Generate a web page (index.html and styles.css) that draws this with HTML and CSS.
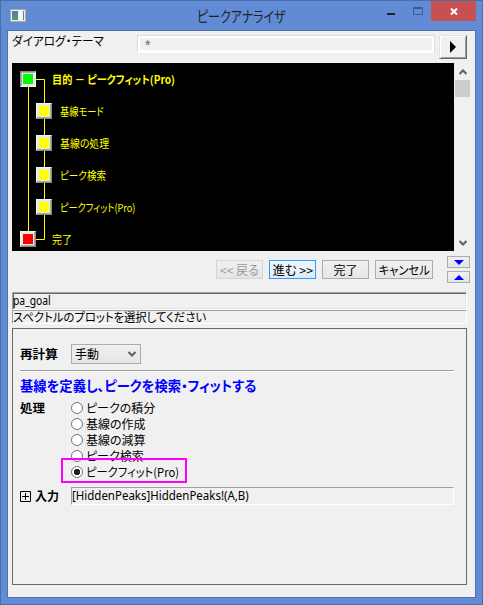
FILE: index.html
```html
<!DOCTYPE html>
<html lang="ja">
<head>
<meta charset="utf-8">
<title>ピークアナライザ</title>
<link rel="stylesheet" href="styles.css">
</head>
<body>
<div class="window">
  <header class="titlebar">
    <svg class="appicon" width="16" height="13" viewBox="0 0 16 13"><defs><linearGradient id="g" x2="0" y2="1"><stop stop-color="#5680a8"/><stop offset="1" stop-color="#46a078"/></linearGradient></defs><rect x=".5" y=".5" width="15" height="12" fill="#eee" stroke="#b5aaa0"/><rect x="2" y="2" width="6" height="9" fill="url(#g)"/><rect x="9" y="2" width="3" height="9" fill="#fff"/><rect x="13" y="2" width="1" height="9" fill="url(#g)"/></svg>
    <h1><span class="t title-text">ピークアナライザ</span></h1>
    <div class="controls">
      <span class="min"></span><span class="max"></span>
      <span class="close"><svg width="8" height="7" viewBox="0 0 8 7"><path d="M1 .5 7 6.5M7 .5 1 6.5" stroke="#fff" stroke-width="2"/></svg></span>
    </div>
  </header>
  <main class="client">
    <div class="theme-row">
      <label><span class="t theme-text">ダイアログ・テーマ</span></label>
      <div class="theme-field">*</div>
      <button class="theme-button"><svg width="6" height="12" viewBox="0 0 6 12"><path d="M0 0 6 6 0 12Z"/></svg></button>
    </div>
    <div class="wizard">
      <div class="tree">
        <svg class="wires" width="60" height="188" viewBox="0 0 60 188"><path d="M16.500 16V176M24 16.500H32.500V176.500H24" fill="none" stroke="#ff0"/></svg>
        <div class="node root"><i class="green"></i><b class="t goal-text">目的 － ピークフィット(Pro)</b></div>
        <div class="node"><i></i><span class="t mode-text">基線モード</span></div>
        <div class="node"><i></i><span class="t treat-text">基線の処理</span></div>
        <div class="node"><i></i><span class="t find-text">ピーク検索</span></div>
        <div class="node"><i></i><span class="t fit-text">ピークフィット(Pro)</span></div>
        <div class="node root"><i class="red"></i><span class="t done-text">完了</span></div>
      </div>
      <div class="scroll">
        <svg width="8" height="6" viewBox="0 0 8 6"><path d="M.5 5 4 1.500 7.500 5" fill="none" stroke="#606060" stroke-width="2"/></svg>
        <div class="thumb"></div>
        <svg class="down" width="8" height="6" viewBox="0 0 8 6"><path d="M.5 1 4 4.500 7.500 1" fill="none" stroke="#606060" stroke-width="2"/></svg>
      </div>
    </div>
    <div class="actions">
      <button class="disabled"><span class="t back-text">&lt;&lt; 戻る</span></button>
      <button class="primary"><span class="t next-text">進む &gt;&gt;</span></button>
      <button><span class="t finish-text">完了</span></button>
      <button class="cancel"><span class="t cancel-text">キャンセル</span></button>
      <div class="spin">
        <button><svg width="10" height="5" viewBox="0 0 10 5"><path d="M0 0H10L5 5Z" fill="#00f"/></svg></button>
        <button><svg width="10" height="5" viewBox="0 0 10 5"><path d="M0 5H10L5 0Z" fill="#00f"/></svg></button>
      </div>
    </div>
    <div class="status name"><span class="t name-text">pa_goal</span></div>
    <div class="status hint"><span class="t hint-text">スペクトルのプロットを選択してください</span></div>
    <section class="panel">
      <div class="recalc">
        <b class="t recalc-text">再計算</b>
        <div class="select"><span class="t manual-text">手動</span><svg width="8" height="6" viewBox="0 0 8 6"><path d="M.5 1 4 4.500 7.500 1" fill="none" stroke="#606060" stroke-width="2"/></svg></div>
      </div>
      <h2><span class="t heading-text">基線を定義し、ピークを検索・フィットする</span></h2>
      <div class="process">
        <b class="t process-text">処理</b>
        <div class="options">
          <label><i></i><span class="t o1-text">ピークの積分</span></label>
          <label><i></i><span class="t o2-text">基線の作成</span></label>
          <label><i></i><span class="t o3-text">基線の減算</span></label>
          <label><i></i><span class="t o4-text">ピーク検索</span></label>
          <label><i class="on"></i><span class="t o5-text">ピークフィット(Pro)</span></label>
          <div class="highlight"></div>
        </div>
      </div>
      <div class="input-row">
        <svg width="11" height="11" viewBox="0 0 11 11"><path d="M.5 .5H10.500V10.500H.5ZM2 5.500H9M5.500 2V9" fill="none" stroke="#000"/></svg>
        <b class="t input-text">入力</b>
        <div class="input-field"><span class="t range-text">[HiddenPeaks]HiddenPeaks!(A,B)</span></div>
      </div>
    </section>
  </main>
</div>
</body>
</html>
```

FILE: styles.css
```css
* { box-sizing: border-box; }
body { margin: 0; font: 12px/16px "Noto Sans CJK JP", sans-serif; color: #000; }
button { padding: 0; border: 1px solid #acacac; background: linear-gradient(#f0f0f0, #e5e5e5); font: inherit; color: inherit; display: flex; align-items: center; justify-content: center; }
svg { display: block; flex: none; }
.t { display: inline-block; flex: none; white-space: pre; transform-origin: 0 50%; font-feature-settings: "palt"; }
button .t { transform-origin: 50% 50%; }

.window { width: 483px; height: 605px; background: #628bd5; border: 1px solid #4a6da7; padding: 0 6px 6px; }
.titlebar { height: 29px; display: flex; align-items: flex-start; margin-right: -1px; }
.appicon { margin: 8px 0 0 3px; }
h1 { margin: 5px 0 0 171px; width: 190px; font: 15px/20px "Noto Sans CJK JP", sans-serif; color: #222; }
.controls { display: flex; flex: none; }
.min { width: 8px; height: 2px; background: #222; margin: 12px 0 0; }
.max { width: 10px; height: 8px; border: 1px solid #415c8d; border-top-width: 2px; margin: 6px 0 0 18px; }
.close { width: 45px; height: 20px; background: #c75050; margin-left: 8px; display: flex; align-items: center; justify-content: center; }

.client { height: 568px; background: #f0f0f0; border: 1px solid #5073b3; padding: 4px 4px 0; }
.theme-row { display: flex; height: 28px; }
.theme-row label { width: 125px; margin-top: -2px; }
.theme-field { width: 298px; height: 18px; border: 1px solid #dcdcdc; border-bottom-color: #fff; box-shadow: inset 0 0 0 2px #fff; padding: 1px 7px; color: #666; font: 14px/16px "Liberation Sans", sans-serif; }
.theme-button { width: 28px; height: 24px; margin-left: 4px; background: #f0f0f0; border: 1px solid #e3e3e3; border-right: 1px solid #696969; border-bottom: 1px solid #696969; box-shadow: inset 1px 1px #fff, inset -1px -1px #a0a0a0; }

.wizard { display: flex; height: 188px; }
.tree { width: 442px; background: #000; padding-top: 8px; position: relative; color: #ff0; font-size: 11px; }
.wires { position: absolute; left: 0; top: 0; }
.node { position: relative; display: flex; height: 32px; padding-left: 24px; }
.node.root { padding-left: 8px; }
.node i { width: 16px; height: 16px; background: #ff0; border: 1px solid; border-color: #f4f4f4 #888 #888 #f4f4f4; box-shadow: inset -1px -1px #aaa, inset 0 0 0 2px #e8e8e8; margin-right: 8px; }
.node.root i { margin-right: 16px; }
.node .green { background: #0f0; border-color: #888 #f4f4f4 #f4f4f4 #888; box-shadow: inset 1px 1px #aaa, inset 0 0 0 2px #e8e8e8; }
.node .red { background: #f00; }
.scroll { width: 17px; display: flex; flex-direction: column; align-items: center; padding-top: 6px; }
.thumb { width: 15px; height: 17px; background: #cdcdcd; margin-top: 5px; }
.down { margin: auto 0 5px; }

.actions { display: flex; gap: 6px; height: 41px; padding: 9px 0 0 204px; }
.actions > button { width: 47px; height: 19px; flex: none; }
.actions > .cancel { width: 58px; }
.actions > .disabled { color: #999; border-color: #d5d5d5; }
.actions > .primary { border-color: #3399ff; background: linear-gradient(#eef5fc, #dfedfa); }
.spin { margin: -4px 0 0 8px; display: flex; flex-direction: column; gap: 3px; }
.spin button { width: 23px; height: 12px; }

.status { width: 455px; border: 1px solid; border-color: #a0a0a0 #fff #fff #a0a0a0; display: flex; align-items: center; }
.name { height: 18px; box-shadow: inset 1px 1px #696969, inset -1px -1px #e3e3e3; }
.hint { height: 14px; }

.panel { margin-top: 4px; width: 455px; height: 257px; border: 1px solid #696969; padding: 15px 7px 0; }
.recalc { display: flex; height: 27px; border-bottom: 1px solid #a0a0a0; box-shadow: 0 1px #fff; width: 434px; }
.recalc > b { width: 51px; margin-top: 2px; }
.select { width: 70px; height: 20px; border: 1px solid #acacac; background: linear-gradient(#f0f0f0, #e5e5e5); display: flex; align-items: center; justify-content: space-between; padding: 0 4px 0 3px; }
h2 { margin: 5px 0 0; height: 24px; font: bold 14px/18px "Noto Sans CJK JP", sans-serif; color: #00f; }
.process { display: flex; height: 87px; }
.process > b { width: 51px; }
.options { position: relative; display: flex; flex-direction: column; }
.options label { display: flex; align-items: center; height: 16px; }
.options i { width: 12px; height: 12px; border: 1px solid #777; border-radius: 50%; background: #fff; margin-right: 3px; }
.options .on { background: radial-gradient(circle at center, #222 0 3px, #fff 3.500px); }
.highlight { position: absolute; left: -10px; top: 58px; width: 126px; height: 25px; border: 2px solid #ff00ff; }
.input-row { display: flex; align-items: center; height: 18px; }
.input-row > b { width: 36px; margin-left: 4px; }
.input-field { width: 383px; height: 18px; border: 1px solid; border-color: #a0a0a0 #fff #fff #a0a0a0; display: flex; align-items: center; }
.range-text, .name-text { font-family: "Noto Sans", sans-serif; }

/* Condensed widths of the dialog's labels */
.title-text { transform: scaleX(.8); }
.theme-text { transform: scaleX(.97); }
.goal-text { transform: scaleX(.925); }
.mode-text { transform: scaleX(.84); }
.treat-text { transform: scaleX(.9); }
.find-text { transform: scaleX(.87); }
.fit-text { transform: scaleX(.83); }
.done-text { transform: scaleX(.9); }
.next-text { transform: scaleX(1.03); }
.cancel-text { transform: scaleX(.94); }
.name-text { transform: scaleX(.86); }
.hint-text { transform: scaleX(.945); }
.recalc-text { transform: scaleX(1.05); }
.heading-text { transform: scaleX(.95); }
.process-text { transform: scaleX(1.04); }
.o5-text { transform: scaleX(.94); }
.range-text { transform: scaleX(.957); }
```
